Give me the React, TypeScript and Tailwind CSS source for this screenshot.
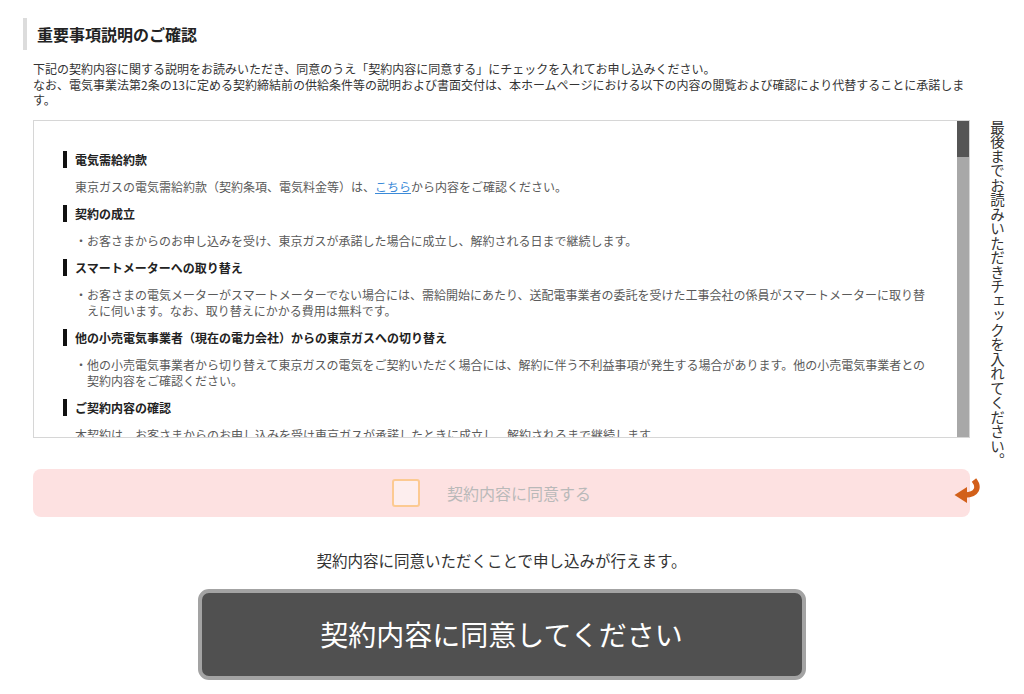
import React from 'react';

type Section = {
  title: string;
  body: React.ReactNode;
  bullet?: boolean;
};

const sections: Section[] = [
  {
    title: '電気需給約款',
    body: (
      <>
        東京ガスの電気需給約款（契約条項、電気料金等）は、
        <a href="#" className="text-[#3b8ad8] underline">
          こちら
        </a>
        から内容をご確認ください。
      </>
    ),
  },
  {
    title: '契約の成立',
    bullet: true,
    body: '・お客さまからのお申し込みを受け、東京ガスが承諾した場合に成立し、解約される日まで継続します。',
  },
  {
    title: 'スマートメーターへの取り替え',
    bullet: true,
    body: '・お客さまの電気メーターがスマートメーターでない場合には、需給開始にあたり、送配電事業者の委託を受けた工事会社の係員がスマートメーターに取り替えに伺います。なお、取り替えにかかる費用は無料です。',
  },
  {
    title: '他の小売電気事業者（現在の電力会社）からの東京ガスへの切り替え',
    bullet: true,
    body: '・他の小売電気事業者から切り替えて東京ガスの電気をご契約いただく場合には、解約に伴う不利益事項が発生する場合があります。他の小売電気事業者との契約内容をご確認ください。',
  },
  {
    title: 'ご契約内容の確認',
    body: '本契約は、お客さまからのお申し込みを受け東京ガスが承諾したときに成立し、解約されるまで継続します。',
  },
];

function ReturnArrow() {
  return (
    <svg width="28" height="27" viewBox="0 0 28 27" fill="none">
      <path d="M21 2 C26.5 9 24.5 16.5 12 17" stroke="#d2601a" strokeWidth="5.5" />
      <path d="M14 9 L1.5 17 L14 25 Z" fill="#d2601a" />
    </svg>
  );
}

export default function App() {
  return (
    <main className="min-h-screen bg-white pt-[18px] font-['Noto_Sans_CJK_JP','Noto_Sans',sans-serif] text-[#333]">
      {/* Page heading */}
      <div className="ml-[23px] flex h-[32px] items-center border-l-4 border-[#dcdcdc] pl-[10px]">
        <h1 className="text-[16px] font-bold leading-none text-[#222]">重要事項説明のご確認</h1>
      </div>

      <p className="ml-[33px] mt-[11px] w-[937px] text-[12px] leading-[15.5px] text-[#333]">
        下記の契約内容に関する説明をお読みいただき、同意のうえ「契約内容に同意する」にチェックを入れてお申し込みください。
        <br />
        なお、電気事業法第2条の13に定める契約締結前の供給条件等の説明および書面交付は、本ホームページにおける以下の内容の閲覧および確認により代替することに承諾します。
      </p>

      <div className="mt-[12px] flex">
        {/* Main column */}
        <div className="ml-[33px] w-[937px]">
          {/* Scroll box */}
          <div className="flex h-[318px] border border-[#d6d6d6] bg-white">
            <div className="flex-1 overflow-hidden pl-[29px] pr-[24px] pt-[29px]">
              {sections.map((s, i) => (
                <section key={i} className={i > 0 ? 'mt-[9px]' : ''}>
                  <h2 className="flex h-[20px] items-center gap-[8px] text-[12px] font-bold text-[#222]">
                    <span className="inline-block h-[17px] w-[4px] bg-[#111]" />
                    {s.title}
                  </h2>
                  <p
                    className={`ml-[12px] mt-[9px] text-[12px] leading-[16px] text-[#5a5a5a] ${
                      s.bullet ? 'pl-[12px] -indent-[12px]' : ''
                    }`}
                  >
                    {s.body}
                  </p>
                </section>
              ))}
            </div>
            {/* Scrollbar */}
            <div className="flex w-[12px] flex-col bg-[#a8a8a8]">
              <div className="h-[36px] bg-[#555]" />
            </div>
          </div>

          {/* Agree checkbox */}
          <div className="relative mt-[31px] flex h-[48px] items-center justify-center gap-[27px] rounded-[8px] bg-[#fde1e1] pr-[20px]">
            <span className="h-[28px] w-[28px] rounded-[3px] border-2 border-[#fcca92] bg-[#fdeeee]" />
            <span className="text-[16px] text-[#b9b9b9]">契約内容に同意する</span>
            <div className="absolute right-[-11px] top-[9px]">
              <ReturnArrow />
            </div>
          </div>

          <p className="mt-[32px] text-center text-[15.5px] leading-[22px] text-[#333]">
            契約内容に同意いただくことで申し込みが行えます。
          </p>

          <div className="mt-[18px] flex justify-center">
            <button className="flex h-[91px] w-[608px] items-center justify-center rounded-[11px] border-[4px] border-[#a3a3a3] bg-[#505050] text-[28px] text-white">
              契約内容に同意してください
            </button>
          </div>
        </div>

        {/* Vertical notice */}
        <div className="ml-[18px]">
          <p className="text-[14.5px] leading-[18px] text-[#333] [writing-mode:vertical-rl] [text-orientation:upright]">
            最後までお読みいただきチェックを入れてください。
          </p>
        </div>
      </div>
    </main>
  );
}
